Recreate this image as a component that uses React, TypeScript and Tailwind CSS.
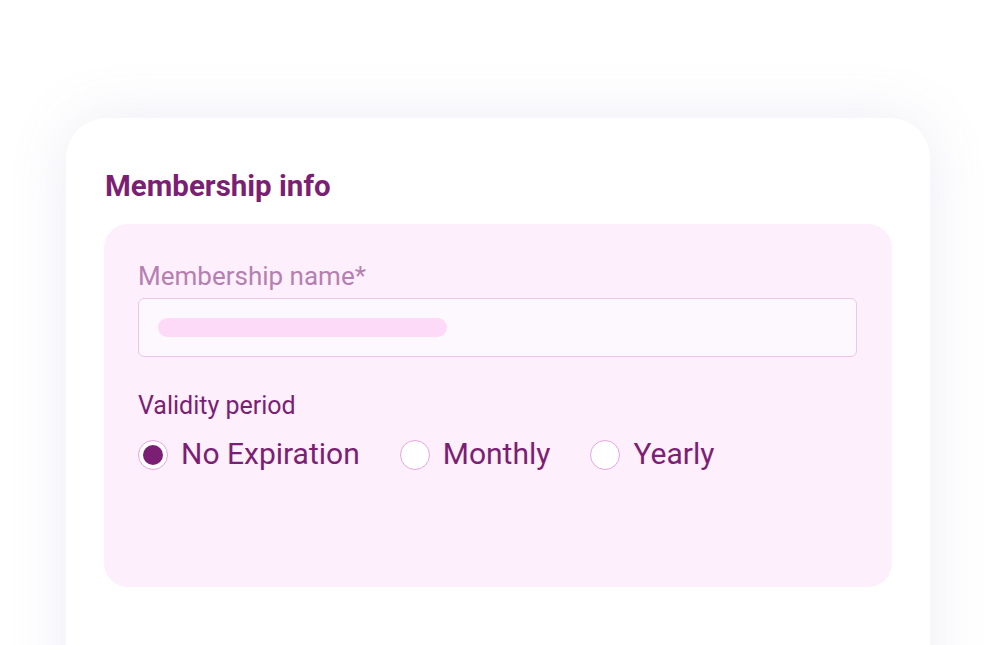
import React, { useState } from 'react';

const options = ['No Expiration', 'Monthly', 'Yearly'];

function Radio({ label, checked, onSelect }: { label: string; checked: boolean; onSelect: () => void }) {
  return (
    <button onClick={onSelect} className="flex items-center gap-[13px] text-left">
      <span className="w-[30px] h-[30px] rounded-full border-[1.5px] border-[#e6a6e1] bg-white flex items-center justify-center">
        {checked && <span className="w-[20px] h-[20px] rounded-full bg-[#7b1f75]" />}
      </span>
      <span className="text-[30px] leading-[34px] text-[#7b1f75] -mt-[2px]">{label}</span>
    </button>
  );
}

export default function App() {
  const [period, setPeriod] = useState('No Expiration');

  return (
    <div className="h-[645px] overflow-hidden bg-white pt-[118px] px-[66px]" style={{ fontFamily: 'Roboto, "Noto Sans", sans-serif' }}>
      <div className="w-[864px] h-[640px] bg-white rounded-[40px] shadow-[0_0_60px_rgba(118,108,170,0.13)] px-[38px] pt-[51px]">
        <h2 className="text-[29.5px] leading-[34px] font-bold text-[#7b1f75] pl-[1px]">Membership info</h2>

        <div className="mt-[21px] h-[363px] rounded-[24px] bg-[#fdf0fc] pl-[34px] pr-[35px] pt-[37px]">
          <label className="block text-[26px] leading-[30px] text-[#b580b1]">Membership name*</label>
          <div className="mt-[7px] h-[59px] rounded-[6px] border border-[#ebc8e8] bg-[#fdf8fd] flex items-center px-[19px]">
            <div className="w-[289px] h-[19px] rounded-full bg-[#fddaf8]" />
          </div>

          <div className="mt-[34px] text-[25px] leading-[30px] text-[#7b1f75]">Validity period</div>
          <div className="mt-[18px] flex items-center gap-[40px]">
            {options.map((o) => (
              <Radio key={o} label={o} checked={period === o} onSelect={() => setPeriod(o)} />
            ))}
          </div>
        </div>
      </div>
    </div>
  );
}
